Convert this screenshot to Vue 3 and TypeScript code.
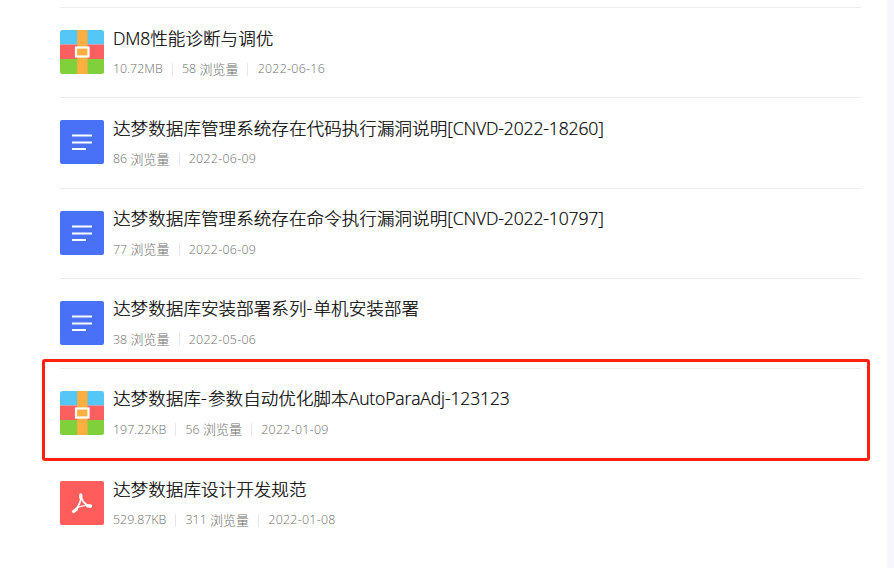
<script setup lang="ts">
type FileKind = 'zip' | 'doc' | 'pdf'

interface FileItem {
  kind: FileKind
  title: string
  size?: string
  views: number
  date: string
  marked?: boolean
}

interface Run {
  text: string
  style: 'latin' | 'han' | 'dash'
}

const files: FileItem[] = [
  { kind: 'zip', title: 'DM8性能诊断与调优', size: '10.72MB', views: 58, date: '2022-06-16' },
  { kind: 'doc', title: '达梦数据库管理系统存在代码执行漏洞说明[CNVD-2022-18260]', views: 86, date: '2022-06-09' },
  { kind: 'doc', title: '达梦数据库管理系统存在命令执行漏洞说明[CNVD-2022-10797]', views: 77, date: '2022-06-09' },
  { kind: 'doc', title: '达梦数据库安装部署系列-单机安装部署', views: 38, date: '2022-05-06' },
  { kind: 'zip', title: '达梦数据库-参数自动优化脚本AutoParaAdj-123123', size: '197.22KB', views: 56, date: '2022-01-09', marked: true },
  { kind: 'pdf', title: '达梦数据库设计开发规范', size: '529.87KB', views: 311, date: '2022-01-08' },
]

// Latin, Chinese and lone-dash runs use different tracking
function runs(title: string): Run[] {
  return (title.match(/[\x20-\x7e]+|[^\x20-\x7e]+/g) ?? []).map((text) => ({
    text,
    style: text === '-' ? 'dash' : text.charCodeAt(0) < 128 ? 'latin' : 'han',
  }))
}
</script>

<template>
  <main class="page">
    <ul class="list">
      <li v-for="file in files" :key="file.title" class="row">
        <svg v-if="file.kind === 'zip'" class="icon" viewBox="0 0 44 44">
          <path d="M0 14.5V2.5Q0 0 2.5 0H41.5Q44 0 44 2.5V14.5Z" fill="#55c7f7" />
          <path d="M0 14.5H44V29H0Z" fill="#fc5f5f" />
          <path d="M0 29H44V41.5Q44 44 41.5 44H2.5Q0 44 0 41.5Z" fill="#80d03c" />
          <path d="M17.2 0H27.5V44H17.2Z" fill="#ffae40" />
          <rect x="16" y="17.5" width="12.5" height="9" fill="#ffae40" stroke="#fff" stroke-width="2.2" />
        </svg>
        <svg v-else-if="file.kind === 'doc'" class="icon" viewBox="0 0 44 44">
          <rect width="44" height="44" rx="2" fill="#4871f8" />
          <path d="M12 15.4H32M12 22.5H32M12 29H26" stroke="#fff" stroke-width="2" />
        </svg>
        <svg v-else class="icon" viewBox="0 0 44 44">
          <rect width="44" height="44" rx="2" fill="#ff5c5c" />
          <g fill="none" stroke="#fff" stroke-linecap="round" stroke-linejoin="round">
            <path d="M20.9 14C21.4 19 19.2 25 14 30.4" stroke-width="1.7" />
            <path d="M20.9 14C21 18.8 24.6 23.6 30.4 25.6" stroke-width="1.7" />
            <path d="M16 27.6C19.4 25.6 23.4 24.5 29 24.2" stroke-width="1.3" />
            <path d="M20.8 14V16.6M13.6 30.5L16.4 28.3M27.6 24.8L30.6 25" stroke-width="3.3" />
          </g>
        </svg>
        <div class="body">
          <h3 class="title"><span v-for="(run, i) in runs(file.title)" :key="i" :class="run.style">{{ run.text }}</span></h3>
          <div class="meta">
            <span v-if="file.size" class="cell">{{ file.size }}</span>
            <span class="cell">{{ file.views }} <span class="unit">浏览量</span></span>
            <span class="cell date">{{ file.date }}</span>
          </div>
        </div>
        <div v-if="file.marked" class="mark"></div>
      </li>
    </ul>
  </main>
</template>

<style>
body {
  background: #f6f7fc;
}
</style>

<style scoped>
.page {
  box-sizing: border-box;
  width: 887px;
  height: 568px;
  padding: 7.2px 26px 0 60px;
  overflow: hidden;
  background: #fff;
  font-family: "Open Sans", "Noto Sans CJK SC", sans-serif;
  font-weight: 300;
}
.list {
  margin: 0;
  padding: 0;
  list-style: none;
}
.row {
  position: relative;
  box-sizing: border-box;
  display: flex;
  gap: 9px;
  height: 90.2px;
  padding-top: 22px;
  border-top: 1px solid #ededed;
}
.icon {
  flex: none;
  width: 44px;
  height: 44px;
}
.body {
  min-width: 0;
}
.title {
  height: 30px;
  margin: -7.5px 0 0;
  font-size: 17.6px;
  font-weight: 300;
  line-height: 30px;
  color: #000;
  -webkit-text-stroke: 0.2px #000;
  white-space: nowrap;
}
.latin {
  letter-spacing: -0.16px;
}
.dash {
  letter-spacing: 1.3px;
}
.meta {
  display: flex;
  height: 20px;
  margin-top: 6.5px;
  font-size: 12.4px;
  line-height: 20px;
  color: #707070;
  white-space: nowrap;
}
.cell {
  display: flex;
  align-items: center;
  gap: 3.4px;
}
.cell + .cell::before {
  content: "";
  width: 1px;
  height: 13px;
  margin: 0 5.8px 0 9px;
  background: #e8e8e8;
}
.date {
  letter-spacing: 0.28px;
}
.unit {
  margin-top: -1px;
  font-size: 13px;
}
.mark {
  position: absolute;
  z-index: 1;
  top: -10px;
  left: -18px;
  box-sizing: border-box;
  width: 828px;
  height: 102px;
  border: 3px solid #ff2010;
  border-radius: 3px;
}
</style>
